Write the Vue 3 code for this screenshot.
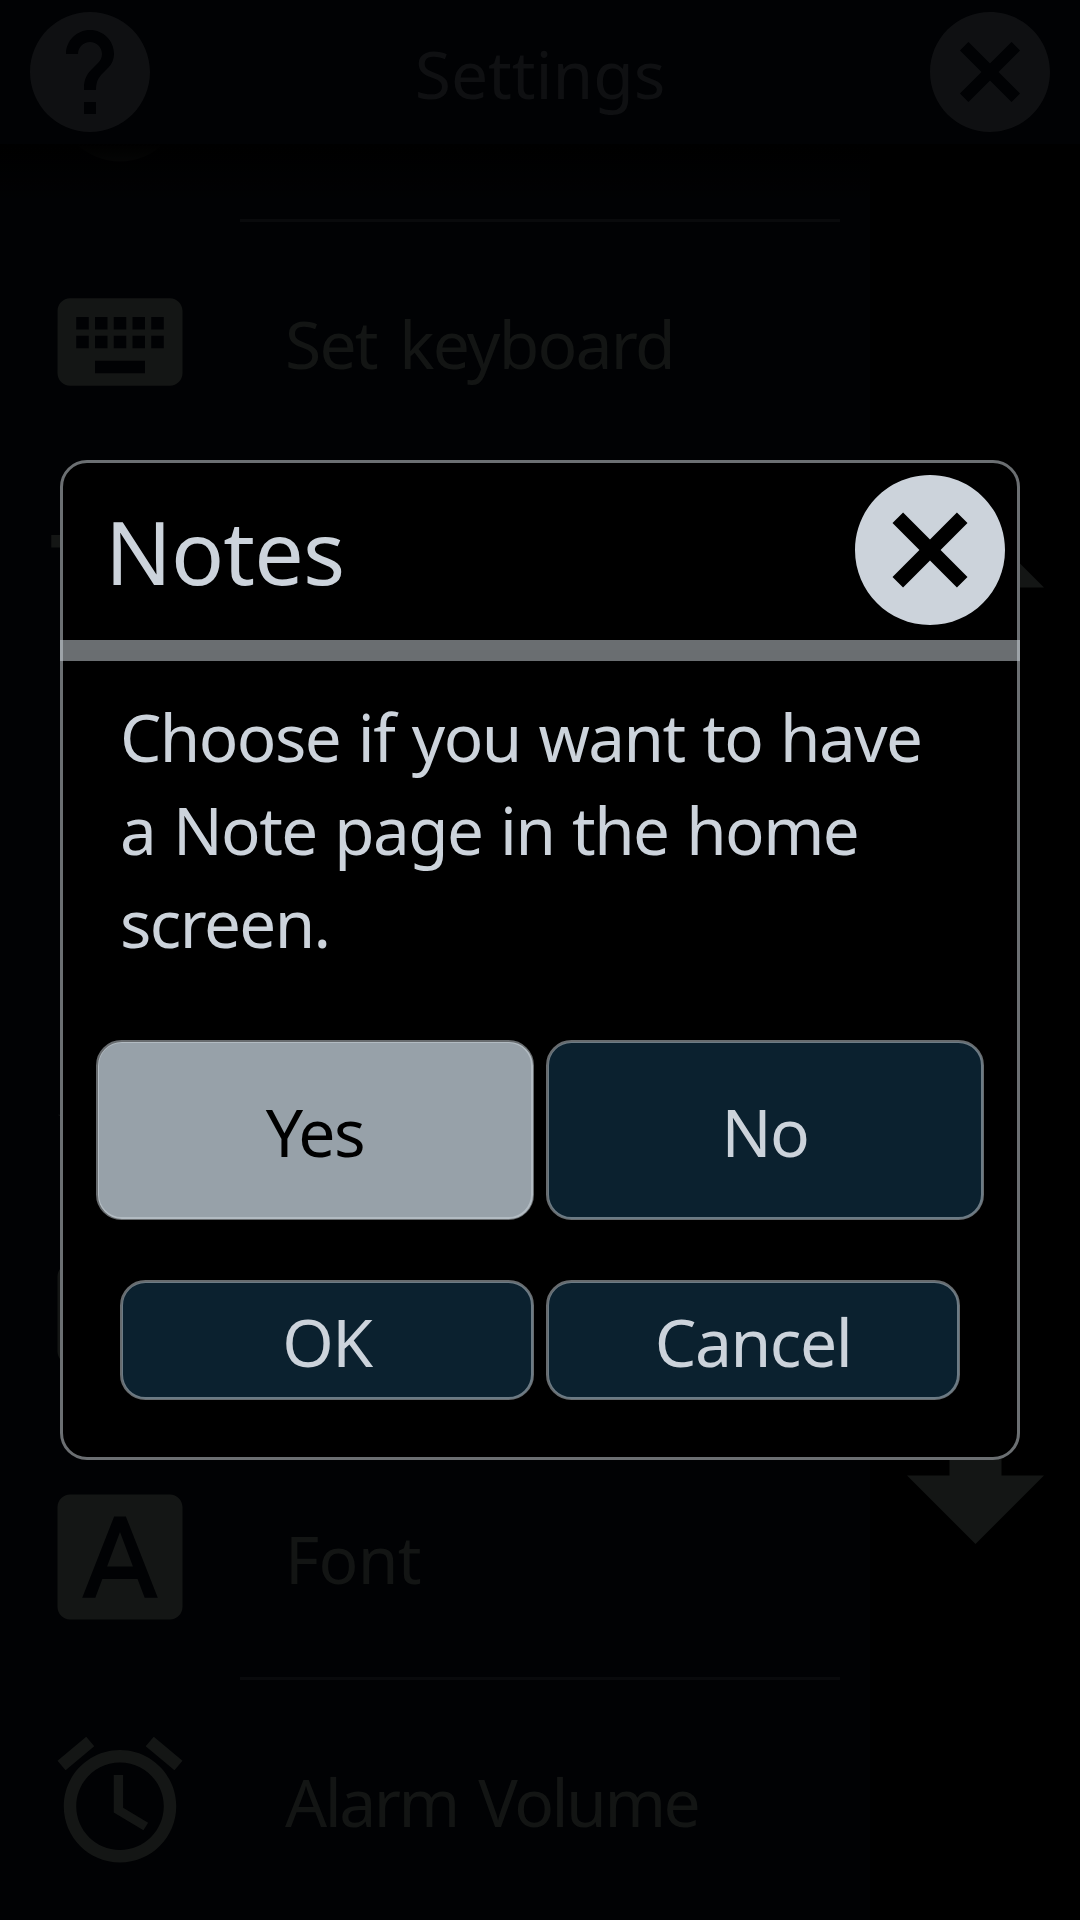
<script setup>
const icons = {
  help: 'M12 2C6.48 2 2 6.48 2 12s4.48 10 10 10 10-4.48 10-10S17.52 2 12 2zm1 17h-2v-2h2v2zm2.07-7.75l-.9.92C13.45 12.9 13 13.5 13 15h-2v-.5c0-1.1.45-2.1 1.17-2.83l1.24-1.26c.37-.36.59-.86.59-1.41 0-1.1-.9-2-2-2s-2 .9-2 2H8c0-2.21 1.79-4 4-4s4 1.79 4 4c0 .88-.36 1.68-.93 2.25z',
  close: 'M12 2C6.47 2 2 6.47 2 12s4.47 10 10 10 10-4.47 10-10S17.53 2 12 2zm5 13.59L15.59 17 12 13.41 8.41 17 7 15.59 10.59 12 7 8.41 8.41 7 12 10.59 15.59 7 17 8.41 13.41 12 17 15.59z',
  disc: 'M12 2a10 10 0 1 0 0 20a10 10 0 1 0 0-20z',
  keyboard: 'M20 5H4c-1.1 0-1.99.9-1.99 2L2 17c0 1.1.9 2 2 2h16c1.1 0 2-.9 2-2V7c0-1.1-.9-2-2-2zm-9 3h2v2h-2V8zm0 3h2v2h-2v-2zM8 8h2v2H8V8zm0 3h2v2H8v-2zm-1 2H5v-2h2v2zm0-3H5V8h2v2zm9 7H8v-2h8v2zm0-4h-2v-2h2v2zm0-3h-2V8h2v2zm3 3h-2v-2h2v2zm0-3h-2V8h2v2z',
  dash: 'M1 4h10v2H1z',
  corner: 'M2 19h2v1z',
  panel: 'M4 4h16c1.1 0 2 .9 2 2v12c0 1.1-.9 2-2 2H4c-1.1 0-2-.9-2-2V6c0-1.1.9-2 2-2z',
  font: 'M9.93 13.5h4.14L12 7.98zM20 2H4c-1.1 0-2 .9-2 2v16c0 1.1.9 2 2 2h16c1.1 0 2-.9 2-2V4c0-1.1-.9-2-2-2zm-4.05 16.5l-1.14-3H9.17l-1.12 3H5.96l5.11-13h1.86l5.11 13h-2.09z',
  alarm: 'M22 5.72l-4.6-3.86-1.29 1.53 4.6 3.86L22 5.72zM7.88 3.39L6.6 1.86 2 5.71l1.29 1.53 4.59-3.85zM12.5 8H11v6l4.75 2.85.75-1.23-4-2.37V8zM12 4c-4.97 0-9 4.03-9 9s4.02 9 9 9c4.97 0 9-4.03 9-9s-4.03-9-9-9zm0 16c-3.87 0-7-3.13-7-7s3.13-7 7-7 7 3.13 7 7-3.13 7-7 7z',
}

const rows = [
  { icon: 'disc', label: '' },
  { icon: 'keyboard', label: 'Set keyboard', cls: 'snug' },
  { icon: 'dash', label: '' },
  { icon: '', label: '' },
  { icon: 'corner', label: '' },
  { icon: 'panel', label: '' },
  { icon: 'font', label: 'Font', cls: 'regular' },
  { icon: 'alarm', label: 'Alarm Volume', cls: 'tight' },
]
</script>

<template>
  <div class="screen">
    <header class="topbar">
      <svg class="top-icon" viewBox="0 0 24 24"><path :d="icons.help" /></svg>
      <h1>Settings</h1>
      <svg class="top-icon" viewBox="0 0 24 24"><path :d="icons.close" /></svg>
    </header>

    <main class="content">
      <div class="list">
        <div v-for="(row, i) in rows" :key="i" class="row">
          <div class="row-body">
            <svg class="row-icon" viewBox="0 0 24 24"><path :d="icons[row.icon] || ''" /></svg>
            <span class="row-label" :class="row.cls">{{ row.label }}</span>
          </div>
          <div class="divider"></div>
        </div>
      </div>
      <aside class="scroller">
        <svg class="arrow" viewBox="0 0 137 120"><path d="M68.5 0L137 68.5H94.5V120H42.5V68.5H0z" /></svg>
        <svg class="arrow" viewBox="0 0 137 120"><path d="M68.5 120L137 51.5H94.5V0H42.5V51.5H0z" /></svg>
      </aside>
      <div class="shade"></div>
    </main>

    <div class="overlay">
      <section class="dialog">
        <div class="dialog-head">
          <h2>Notes</h2>
          <svg class="dialog-close" viewBox="0 0 24 24"><path :d="icons.close" /></svg>
        </div>
        <div class="bar"></div>
        <p class="message">Choose if you want to have a Note page in the home screen.</p>
        <div class="choices">
          <button class="btn selected">Yes</button>
          <button class="btn">No</button>
        </div>
        <div class="actions">
          <button class="btn">OK</button>
          <button class="btn">Cancel</button>
        </div>
      </section>
    </div>
  </div>
</template>

<style>
html,
body {
  margin: 0;
  background: #000;
}
</style>

<style scoped>
.screen {
  position: relative;
  display: flex;
  flex-direction: column;
  width: 1080px;
  height: 1920px;
  overflow: hidden;
  background: #000;
  font-family: "Noto Sans", "Open Sans", sans-serif;
  font-size: 66px;
  font-weight: 400;
}

.topbar {
  display: flex;
  flex: none;
  align-items: center;
  justify-content: space-between;
  height: 144px;
  padding: 0 18px;
  background: #010204;
  color: #0f1012;
}

h1,
h2 {
  margin: 0;
  padding-top: 2px;
  font-weight: 400;
}

h1 {
  font-size: 66px;
  line-height: 120px;
  letter-spacing: -0.1px;
}

.top-icon {
  width: 144px;
  height: 144px;
  fill: #0f1012;
}

.content {
  position: relative;
  display: flex;
  flex: none;
  height: 1776px;
  overflow: hidden;
}

.list {
  width: 870px;
  height: 1944px;
  margin-top: -165px;
  background: #010204;
}

.row {
  height: 243px;
}

.row-body {
  display: flex;
  align-items: center;
  height: 240px;
  padding-left: 45px;
}

.row-icon {
  flex: none;
  width: 150px;
  height: 150px;
  fill: #141615;
}

.row-label {
  margin-left: 90px;
  padding-top: 2px;
  color: #131514;
  line-height: 90px;
  white-space: nowrap;
}

.row-label.snug {
  letter-spacing: -1.8px;
  word-spacing: 7px;
}

.row-label.regular {
  letter-spacing: -0.7px;
}

.row-label.tight {
  letter-spacing: -2.5px;
  word-spacing: 6px;
}

.divider {
  width: 600px;
  height: 3px;
  margin-left: 240px;
  background: #090a0c;
}

.scroller {
  display: flex;
  flex-direction: column;
  align-items: center;
  justify-content: space-between;
  width: 210px;
  height: 1025px;
  margin-top: 375px;
}

.arrow {
  width: 137px;
  height: 120px;
  fill: #141615;
}

.shade {
  position: absolute;
  top: 0;
  left: 0;
  width: 100%;
  height: 60px;
  background: linear-gradient(#000, rgba(0, 0, 0, 0.7) 40%, transparent);
}

.overlay {
  position: absolute;
  inset: 0;
  display: flex;
  align-items: center;
  justify-content: center;
}

.dialog {
  position: relative;
  box-sizing: border-box;
  width: 960px;
  height: 1000px;
  border-radius: 27px;
  background: #000;
  color: #ccd3db;
}

.dialog::after {
  content: "";
  position: absolute;
  inset: 0;
  border: 3px solid rgba(205, 213, 219, 0.52);
  border-radius: 27px;
  pointer-events: none;
}

.dialog-head {
  display: flex;
  align-items: center;
  justify-content: space-between;
  height: 180px;
  padding-left: 45px;
}

h2 {
  font-size: 88px;
  line-height: 120px;
  letter-spacing: -0.9px;
}

.dialog-close {
  width: 180px;
  height: 180px;
  fill: #ccd3db;
}

.bar {
  height: 21px;
  background: #6a6e71;
}

.message {
  width: 830px;
  height: 278px;
  margin: 29px 0 0 60px;
  font-size: 65.5px;
  line-height: 93px;
  letter-spacing: -1.55px;
  word-spacing: 2.2px;
}

.choices,
.actions {
  display: flex;
  gap: 15px;
}

.choices {
  height: 177px;
  margin: 73.5px 37.5px 0;
}

.actions {
  height: 117px;
  margin: 63px 61.5px 0;
}

.btn {
  position: relative;
  flex: 1;
  padding: 2px 0 0;
  border: 0;
  border-radius: 24px;
  background: #0b212f;
  color: #ccd3db;
  font: inherit;
  letter-spacing: -1.5px;
}

.btn::after {
  content: "";
  position: absolute;
  inset: -1.5px;
  border: 3px solid rgba(205, 213, 219, 0.5);
  border-radius: 25.5px;
}

.btn.selected {
  background: #97a1a9;
  color: #000;
}
</style>
